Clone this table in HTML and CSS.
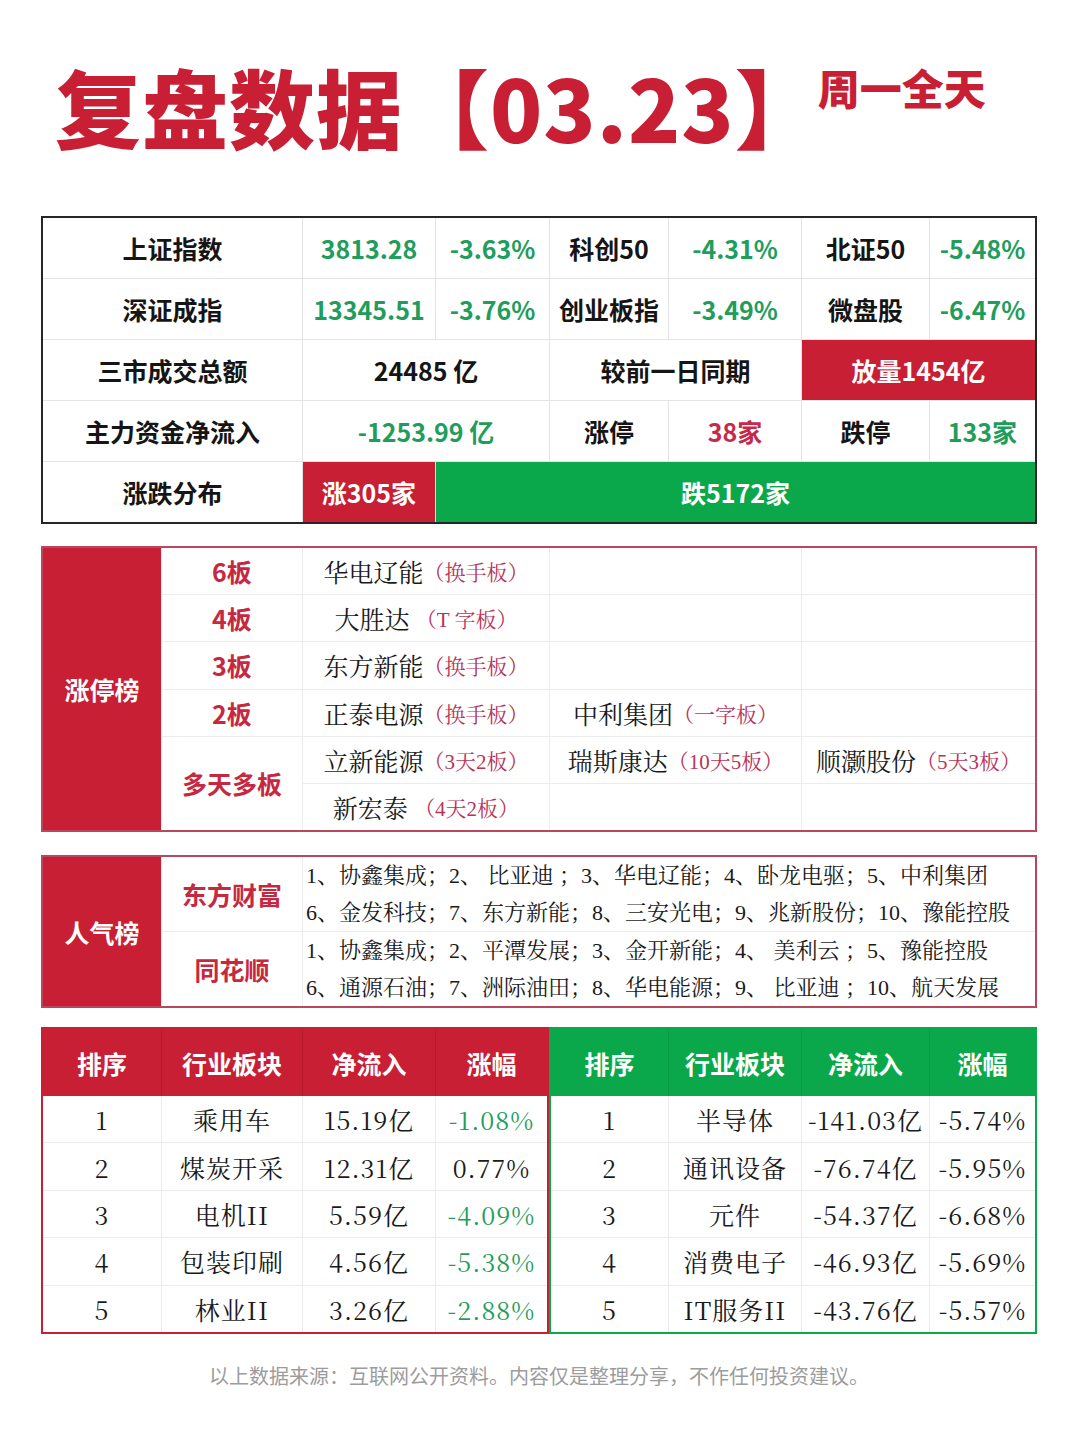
FILE: index.html
```html
<!DOCTYPE html>
<html lang="zh-CN">
<head>
<meta charset="utf-8">
<title>复盘数据</title>
<link rel="stylesheet" href="styles.css">
</head>
<body>
<div class="page">
  <header class="hero">
    <h1 class="title">复盘数据【03.23】</h1>
    <div class="day">周一全天</div>
  </header>

  <section class="t1">
    <div class="c s2">上证指数</div><div class="c g">3813.28</div><div class="c g">-3.63%</div><div class="c">科创50</div><div class="c g">-4.31%</div><div class="c">北证50</div><div class="c g">-5.48%</div>
    <div class="c s2">深证成指</div><div class="c g">13345.51</div><div class="c g">-3.76%</div><div class="c">创业板指</div><div class="c g">-3.49%</div><div class="c">微盘股</div><div class="c g">-6.47%</div>
    <div class="c s2">三市成交总额</div><div class="c s2">24485 亿</div><div class="c s2">较前一日同期</div><div class="c s2 bg-red">放量1454亿</div>
    <div class="c s2">主力资金净流入</div><div class="c s2 g">-1253.99 亿</div><div class="c">涨停</div><div class="c rd">38家</div><div class="c">跌停</div><div class="c g">133家</div>
    <div class="c s2">涨跌分布</div><div class="c bg-red">涨305家</div><div class="c s5 bg-green">跌5172家</div>
  </section>

  <section class="t2">
    <div class="side r6">涨停榜</div>
    <div class="lv">6板</div><div class="nm s2">华电辽能<span class="tag">（换手板）</span></div><div class="nm s2"></div><div class="nm s2"></div>
    <div class="lv">4板</div><div class="nm s2">大胜达 <span class="tag">（T 字板）</span></div><div class="nm s2"></div><div class="nm s2"></div>
    <div class="lv">3板</div><div class="nm s2">东方新能<span class="tag">（换手板）</span></div><div class="nm s2"></div><div class="nm s2"></div>
    <div class="lv">2板</div><div class="nm s2">正泰电源<span class="tag">（换手板）</span></div><div class="nm s2">中利集团<span class="tag">（一字板）</span></div><div class="nm s2"></div>
    <div class="lv r2">多天多板</div><div class="nm s2">立新能源<span class="tag">（3天2板）</span></div><div class="nm s2">瑞斯康达<span class="tag">（10天5板）</span></div><div class="nm s2">顺灏股份<span class="tag">（5天3板）</span></div>
    <div class="nm s2">新宏泰 <span class="tag">（4天2板）</span></div><div class="nm s2"></div><div class="nm s2"></div>
  </section>

  <section class="t3">
    <div class="side r2">人气榜</div>
    <div class="lv">东方财富</div>
    <div class="list s6">
      <p>1、协鑫集成；2、 比亚迪 ；3、华电辽能；4、卧龙电驱；5、中利集团</p>
      <p>6、金发科技；7、东方新能；8、三安光电；9、兆新股份；10、豫能控股</p>
    </div>
    <div class="lv">同花顺</div>
    <div class="list s6">
      <p>1、协鑫集成；2、平潭发展；3、金开新能；4、 美利云 ；5、豫能控股</p>
      <p>6、通源石油；7、洲际油田；8、华电能源；9、 比亚迪 ；10、航天发展</p>
    </div>
  </section>

  <section class="t4">
    <div class="rank up">
      <div class="rank-head"><div>排序</div><div>行业板块</div><div>净流入</div><div>涨幅</div></div>
      <div class="rank-body">
        <div>1</div><div>乘用车</div><div>15.19亿</div><div class="g">-1.08%</div>
        <div>2</div><div>煤炭开采</div><div>12.31亿</div><div>0.77%</div>
        <div>3</div><div>电机II</div><div>5.59亿</div><div class="g">-4.09%</div>
        <div>4</div><div>包装印刷</div><div>4.56亿</div><div class="g">-5.38%</div>
        <div>5</div><div>林业II</div><div>3.26亿</div><div class="g">-2.88%</div>
      </div>
    </div>
    <div class="rank down">
      <div class="rank-head"><div>排序</div><div>行业板块</div><div>净流入</div><div>涨幅</div></div>
      <div class="rank-body">
        <div>1</div><div>半导体</div><div>-141.03亿</div><div>-5.74%</div>
        <div>2</div><div>通讯设备</div><div>-76.74亿</div><div>-5.95%</div>
        <div>3</div><div>元件</div><div>-54.37亿</div><div>-6.68%</div>
        <div>4</div><div>消费电子</div><div>-46.93亿</div><div>-5.69%</div>
        <div>5</div><div>IT服务II</div><div>-43.76亿</div><div>-5.57%</div>
      </div>
    </div>
  </section>

  <footer class="note">以上数据来源：互联网公开资料。内容仅是整理分享，不作任何投资建议。</footer>
</div>
</body>
</html>
```

FILE: styles.css
```css
* { box-sizing: border-box; }
html, body { margin: 0; padding: 0; background: #ffffff; }
body {
  font-family: "Noto Sans CJK SC", "Noto Sans", sans-serif;
  color: #151515;
  width: 1080px;
  height: 1451px;
  overflow: hidden;
}
.page { width: 996px; margin-left: 41px; }

/* header */
.hero { display: flex; align-items: flex-start; padding: 63px 0 0 14px; height: 216px; }
.title {
  margin: 0;
  font-size: 86px;
  line-height: 86px;
  font-weight: 900;
  color: #c81f34;
  letter-spacing: 1px;
  white-space: nowrap;
}
.day {
  margin: 3px 0 0 -4px;
  font-size: 42px;
  line-height: 42px;
  font-weight: 900;
  color: #c81f34;
  white-space: nowrap;
}

/* shared */
.s2 { grid-column: span 2; }
.s5 { grid-column: span 5; }
.s6 { grid-column: span 6; }
.r2 { grid-row: span 2; }
.r6 { grid-row: span 6; }
.g { color: #1f9d5c; }
.rd { color: #c42a4a; }

/* table 1 */
.t1 {
  display: grid;
  grid-template-columns: 118px 140px 132px 113px 118px 132px 127px 105px;
  grid-template-rows: repeat(5, minmax(0, 1fr));
  gap: 1px;
  height: 308px;
  border: 2px solid #262626;
  background: #e4e4e4;
}
.t1 .c {
  background: #fff;
  display: flex;
  align-items: center;
  justify-content: center;
  font-size: 25px;
  font-weight: 700;
  white-space: nowrap;
}
.t1 .c.g { color: #1f9d5c; }
.t1 .c.rd { color: #c42a4a; }
.t1 .bg-red { background: #c81f34; color: #fff; }
.t1 .bg-green { background: #0ba84b; color: #fff; }

/* table 2 & 3 */
.t2, .t3 {
  display: grid;
  grid-template-columns: 118px 140px 132px 113px 118px 132px 127px 105px;
  gap: 1px;
  border: 2px solid #b9485e;
  background: #ececec;
}
.t2 { margin-top: 22px; height: 286px; grid-template-rows: repeat(6, minmax(0, 1fr)); }
.t3 { margin-top: 23px; height: 153px; grid-template-rows: repeat(2, minmax(0, 1fr)); }
.side {
  background: #c81f34;
  color: #fff;
  font-size: 25px;
  font-weight: 700;
  display: flex;
  align-items: center;
  justify-content: center;
}
.lv {
  background: #fff;
  color: #c6283f;
  font-size: 25px;
  font-weight: 700;
  display: flex;
  align-items: center;
  justify-content: center;
}
.nm {
  background: #fff;
  display: flex;
  align-items: center;
  justify-content: center;
  font-family: "Liberation Serif", "Noto Serif CJK SC", "Noto Sans CJK SC", serif;
  font-size: 25px;
  color: #1a1a1a;
  white-space: pre;
}
.tag { font-size: 21px; color: #b8345a; }

.list {
  background: #fff;
  display: flex;
  flex-direction: column;
  justify-content: center;
  padding-left: 3px;
  font-family: "Liberation Serif", "Noto Serif CJK SC", "Noto Sans CJK SC", serif;
  font-size: 22px;
  color: #1a1a1a;
  overflow: hidden;
}
.list p { margin: 0; line-height: 37px; white-space: pre; }

/* table 4 */
.t4 { margin-top: 19px; display: flex; height: 307px; }
.rank { display: flex; flex-direction: column; border: 2px solid; }
.rank.up { width: 508px; border-color: #c81f34; }
.rank.down { width: 488px; border-color: #0ba84b; }
.rank.up .rank-head, .rank.up .rank-body { grid-template-columns: 118px 140px 132px 111px; }
.rank.down .rank-head, .rank.down .rank-body { grid-template-columns: 117px 132px 127px 105px; }
.rank-head {
  display: grid;
  gap: 1px;
  height: 67px;
  flex: none;
}
.rank.up .rank-head { background: #b51a2e; }
.rank.down .rank-head { background: #099a44; }
.rank-head div {
  display: flex;
  align-items: center;
  justify-content: center;
  color: #fff;
  font-size: 25px;
  font-weight: 700;
}
.rank.up .rank-head div { background: #c81f34; }
.rank.down .rank-head div { background: #0ba84b; }
.rank-body {
  flex: 1;
  display: grid;
  grid-template-rows: repeat(5, minmax(0, 1fr));
  gap: 1px;
  background: #ececec;
}
.rank-body div {
  background: #fff;
  display: flex;
  align-items: center;
  justify-content: center;
  font-family: "Noto Serif CJK SC", "Liberation Serif", "Noto Sans CJK SC", serif;
  font-size: 25px;
  letter-spacing: 1px;
  color: #1a1a1a;
  white-space: nowrap;
}
.rank-body div.g { color: #1f9d5c; }

.note {
  margin-top: 31px;
  text-align: center;
  font-size: 20px;
  line-height: 22px;
  color: #9c9c9c;
}
```
